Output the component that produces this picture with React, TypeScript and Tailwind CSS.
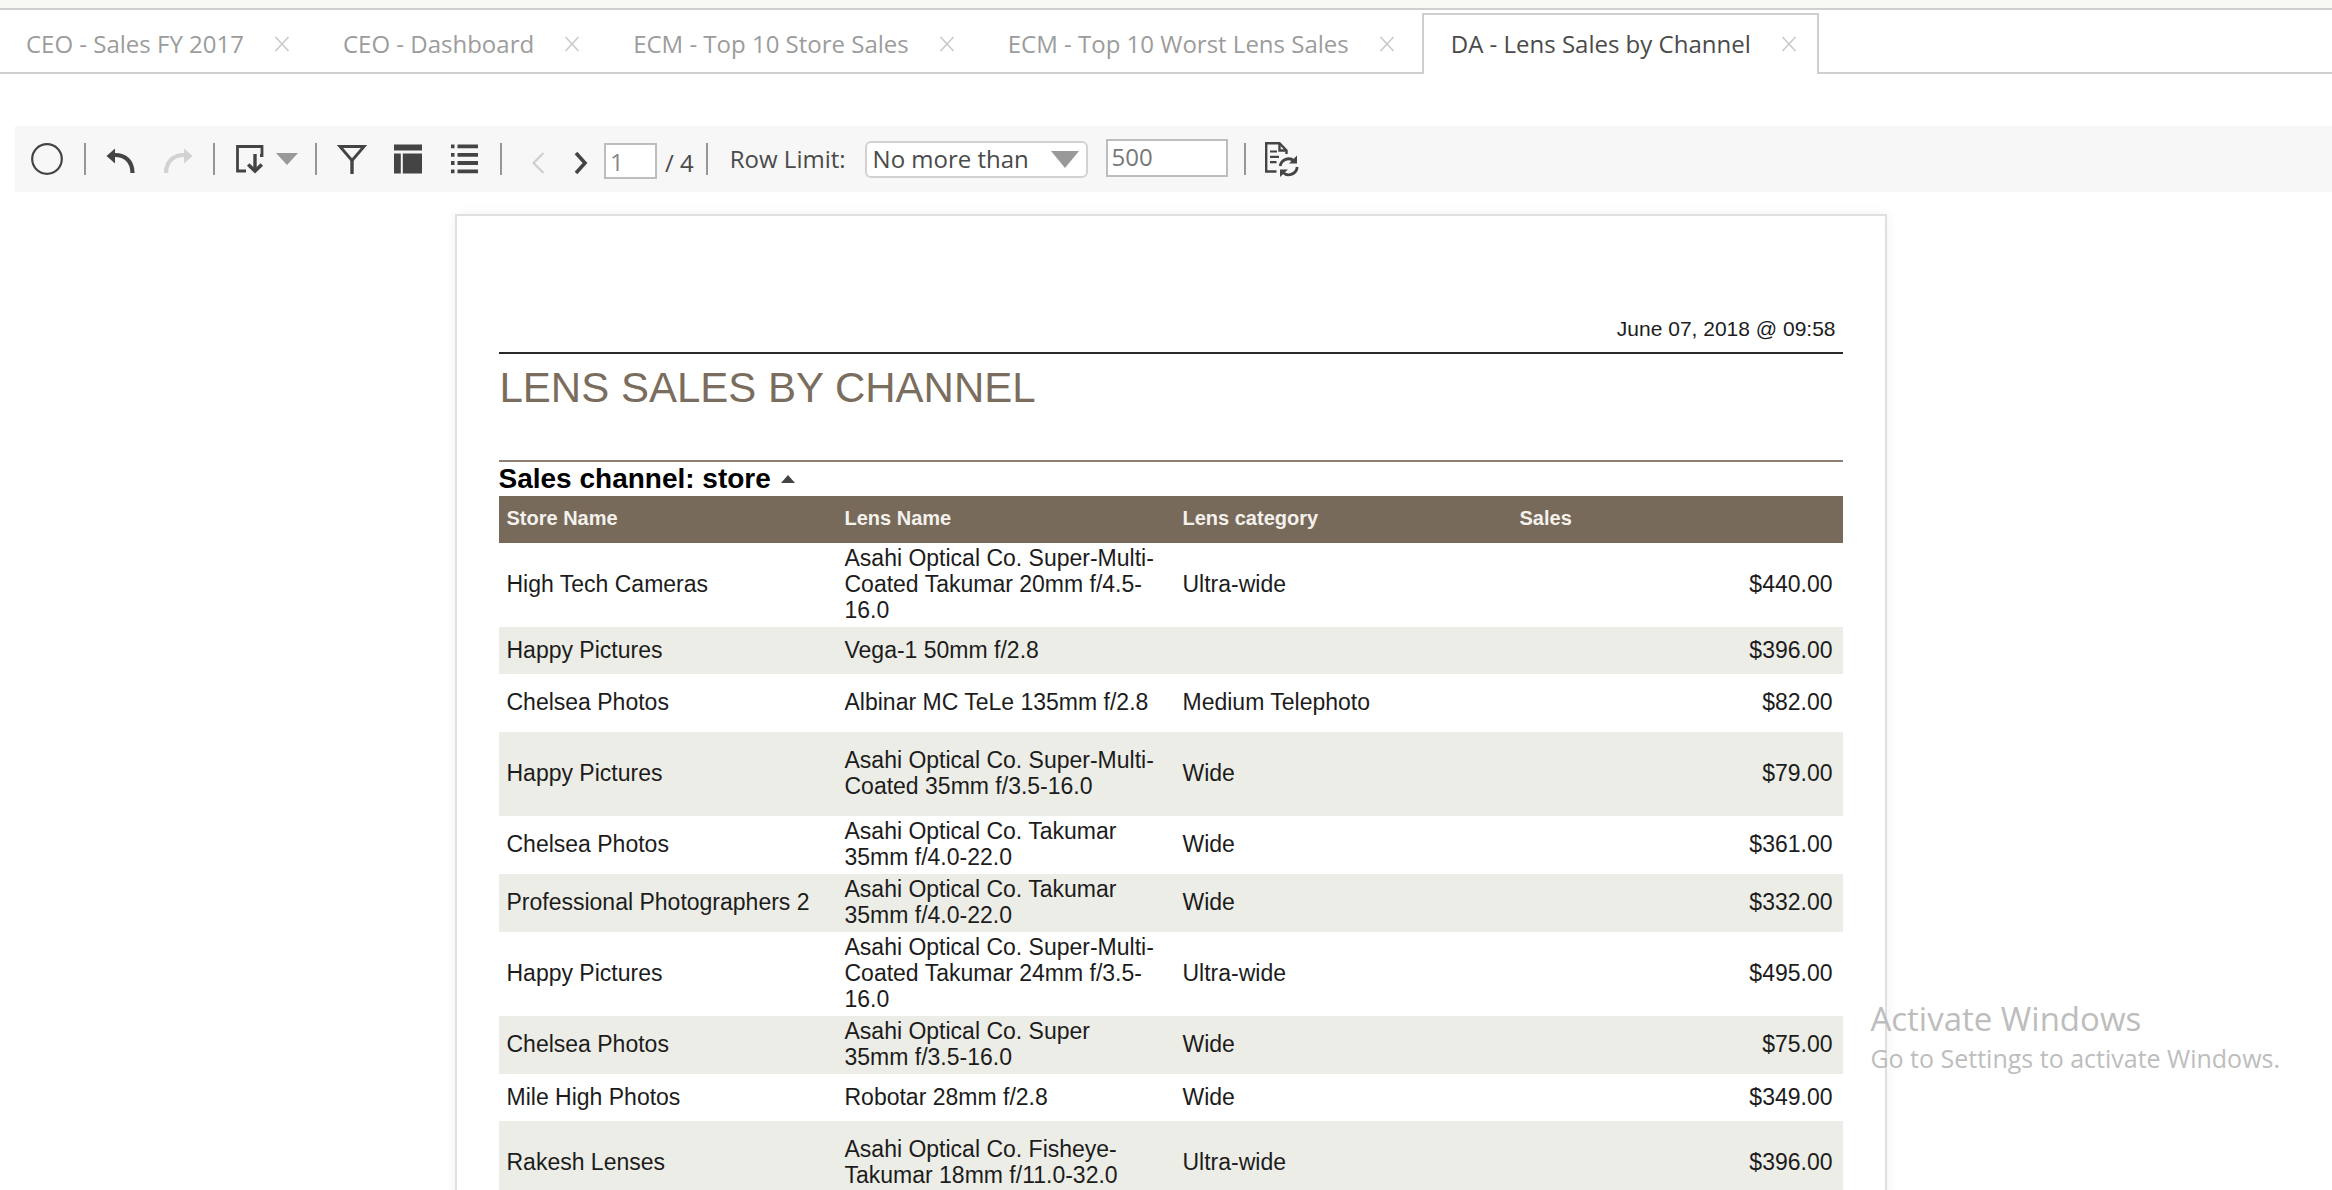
import { useState } from "react";
import type { ReactNode } from "react";

const tabs = [
  "CEO - Sales FY 2017",
  "CEO - Dashboard",
  "ECM - Top 10 Store Sales",
  "ECM - Top 10 Worst Lens Sales",
  "DA - Lens Sales by Channel",
];

type Row = {
  store: string;
  lens: string;
  category: string;
  sales: string;
  height: string;
};

const rows: Row[] = [
  { store: "High Tech Cameras", lens: "Asahi Optical Co. Super-Multi-Coated Takumar 20mm f/4.5-16.0", category: "Ultra-wide", sales: "$440.00", height: "h-[84px]" },
  { store: "Happy Pictures", lens: "Vega-1 50mm f/2.8", category: "", sales: "$396.00", height: "h-[47px]" },
  { store: "Chelsea Photos", lens: "Albinar MC TeLe 135mm f/2.8", category: "Medium Telephoto", sales: "$82.00", height: "h-[58px]" },
  { store: "Happy Pictures", lens: "Asahi Optical Co. Super-Multi-Coated 35mm f/3.5-16.0", category: "Wide", sales: "$79.00", height: "h-[84px]" },
  { store: "Chelsea Photos", lens: "Asahi Optical Co. Takumar 35mm f/4.0-22.0", category: "Wide", sales: "$361.00", height: "h-[58px]" },
  { store: "Professional Photographers 2", lens: "Asahi Optical Co. Takumar 35mm f/4.0-22.0", category: "Wide", sales: "$332.00", height: "h-[58px]" },
  { store: "Happy Pictures", lens: "Asahi Optical Co. Super-Multi-Coated Takumar 24mm f/3.5-16.0", category: "Ultra-wide", sales: "$495.00", height: "h-[84px]" },
  { store: "Chelsea Photos", lens: "Asahi Optical Co. Super 35mm f/3.5-16.0", category: "Wide", sales: "$75.00", height: "h-[58px]" },
  { store: "Mile High Photos", lens: "Robotar 28mm f/2.8", category: "Wide", sales: "$349.00", height: "h-[47px]" },
  { store: "Rakesh Lenses", lens: "Asahi Optical Co. Fisheye-Takumar 18mm f/11.0-32.0", category: "Ultra-wide", sales: "$396.00", height: "h-[84px]" },
];

function TabBar() {
  const [active, setActive] = useState(4);
  return (
    <nav aria-label="Open reports" className="flex h-[61px]">
      {tabs.map((title, i) => (
        <div
          key={title}
          className={
            i === active
              ? "flex items-center gap-[30px] border-2 border-b-0 border-[#cfcfcf] pr-5 pl-[27px] pb-0.5"
              : "flex items-center gap-[30px] border-b-2 border-[#cfcfcf] pt-0.5 pr-[27px] pl-[26px]"
          }
        >
          <button
            type="button"
            onClick={() => setActive(i)}
            className={
              i === active
                ? "whitespace-nowrap text-[#4a4a4a]"
                : "whitespace-nowrap text-[#9c9c9c]"
            }
          >
            {title}
          </button>
          <button type="button" aria-label={"Close " + title}>
            <svg viewBox="0 0 16 16" className="h-4 w-4 stroke-[#cacaca]" strokeWidth="1.6" fill="none">
              <path d="M1.5 1l13 14M14.5 1l-13 14" />
            </svg>
          </button>
        </div>
      ))}
      <div className="flex-1 border-b-2 border-[#cfcfcf]" />
    </nav>
  );
}

function Divider({ className }: { className: string }) {
  return <span className={"h-8 w-0.5 shrink-0 bg-[#98968f] " + className} />;
}

function Tool({ label, className, children }: { label: string; className: string; children: ReactNode }) {
  return (
    <button type="button" aria-label={label} className={"shrink-0 " + className}>
      {children}
    </button>
  );
}

function Toolbar() {
  return (
    <div role="toolbar" aria-label="Report" className="ml-[15px] flex h-[66px] items-center bg-[#f7f7f7] pl-[15px] text-[#4a4a4a]">
      <Tool label="Status" className="mr-5">
        <svg viewBox="0 0 34 34" className="h-[34px] w-[34px]" fill="none" stroke="#444" strokeWidth="2.2">
          <circle cx="17" cy="17" r="14.8" />
        </svg>
      </Tool>
      <Divider className="mr-5" />
      <Tool label="Undo" className="mr-[27px]">
        <svg viewBox="0 0 30 30" className="h-[30px] w-[30px]">
          <path d="M9 11C19 11 26.500 17 26.500 29" fill="none" stroke="#444" strokeWidth="4.200" />
          <path d="M.5 12L9 4.500V19.500z" fill="#444" />
        </svg>
      </Tool>
      <Tool label="Redo" className="mr-5">
        <svg viewBox="0 0 30 30" className="h-[30px] w-[30px]">
          <path d="M21 11C11 11 3 17 3 29" fill="none" stroke="#d2d2d2" strokeWidth="4.200" />
          <path d="M29.500 12L21 4.500V19.500z" fill="#d2d2d2" />
        </svg>
      </Tool>
      <Divider className="mr-5" />
      <Tool label="Export" className="mr-[17px] flex items-center gap-[11px]">
        <svg viewBox="0 0 30 30" className="h-[30px] w-[30px]" fill="none" stroke="#444">
          <path d="M11 27H2.500V2.500H27V11.500H25" strokeWidth="2.800" />
          <path d="M20 10V27" strokeWidth="3.400" />
          <path d="M13.200 20.500L20 27L26.800 20.500" strokeWidth="3.600" />
        </svg>
        <svg viewBox="0 0 22 12" className="h-3 w-[22px]" fill="#999">
          <path d="M0 0H22L11 12z" />
        </svg>
      </Tool>
      <Divider className="mr-5" />
      <Tool label="Filters" className="mr-[26px]">
        <svg viewBox="0 0 30 30" className="h-[30px] w-[30px]" fill="none" stroke="#444">
          <path d="M3 2.500H27L15 16.500z" strokeWidth="2.800" />
          <path d="M15 15V30" strokeWidth="3.400" />
        </svg>
      </Tool>
      <Tool label="Layout" className="mr-[27px]">
        <svg viewBox="0 0 30 30" className="h-[30px] w-[30px]" fill="#444">
          <path d="M1 0.500H29V6.500H1zM1 9.500H7.800V29.500H1zM9.800 9.500H29V29.500H9.800z" />
        </svg>
      </Tool>
      <Tool label="Table of contents" className="mr-5">
        <svg viewBox="0 0 30 30" className="h-[30px] w-[30px]" fill="#444">
          <path d="M1 0.500H4.500V4.300H1zM7.500 0.500H28V4.300H7.500zM1 8.900H4.500V12.700H1zM7.500 8.900H28V12.700H7.500zM1 17.100H4.500V20.900H1zM7.500 17.100H28V20.900H7.500zM1 25.500H4.500V29.300H1zM7.500 25.500H28V29.300H7.500z" />
        </svg>
      </Tool>
      <Divider className="mr-[29px]" />
      <Tool label="Previous page" className="mr-[29px] pt-2">
        <svg viewBox="0 0 14 22" className="h-[22px] w-[14px]" fill="none" stroke="#cfcfcf" strokeWidth="2.200">
          <path d="M12.500 1L2.500 11L12.500 21" />
        </svg>
      </Tool>
      <Tool label="Next page" className="mr-4 pt-2">
        <svg viewBox="0 0 14 22" className="h-[22px] w-[14px]" fill="none" stroke="#444" strokeWidth="3.600">
          <path d="M2 1L11 11L2 21" />
        </svg>
      </Tool>
      <input
        aria-label="Page"
        defaultValue="1"
        className="mt-1 mr-2 h-9 w-[53px] shrink-0 border-2 border-[#bdbdbd] bg-white px-1 text-[#888]"
      />
      <span className="mt-2 mr-3 whitespace-nowrap">/ 4</span>
      <Divider className="mr-[22px]" />
      <label htmlFor="limit-mode" className="mr-[19px] whitespace-nowrap">
        Row Limit:
      </label>
      <div className="relative mr-[18px] shrink-0">
        <select
          id="limit-mode"
          className="block h-[37px] w-[223px] appearance-none rounded-md border-2 border-[#d2d2d2] bg-white pl-1.5 leading-8 text-[#4a4a4a]"
        >
          <option>No more than</option>
        </select>
        <svg viewBox="0 0 28 17" className="pointer-events-none absolute top-[10px] right-[9px] h-[17px] w-7" fill="#999">
          <path d="M0 0H28L14 17z" />
        </svg>
      </div>
      <input
        aria-label="Row limit"
        defaultValue="500"
        className="mr-4 mb-0.5 h-[38px] w-[122px] shrink-0 border-2 border-[#bdbdbd] bg-white px-1 pb-1 text-[#777]"
      />
      <Divider className="mr-[18px]" />
      <Tool label="Refresh data" className="">
        <svg viewBox="0 0 36 36" className="h-9 w-9" fill="none" stroke="#444" strokeWidth="2.400">
          <path d="M12.500 30.500H2.200V2.200H15.500L22.500 9.500V13" />
          <path d="M15.500 2.500V9.500H22.500" strokeWidth="2.400" />
          <path d="M6 10.500H13M6 15.800H15M6 21.200H12.500" strokeWidth="2.200" />
          <path d="M16.200 25A8.500 8.500 0 0 1 30 19.800M33.200 26A8.500 8.500 0 0 1 19 31.500" strokeWidth="2.800" />
          <path d="M33 14.500V22.500H25zM16 36V28.500H24z" fill="#444" stroke="none" />
        </svg>
      </Tool>
    </div>
  );
}

function SalesTable() {
  return (
    <table className="w-full table-fixed border-collapse text-[23px] leading-[26px] text-[#1c1c1c]">
      <colgroup>
        <col className="w-[338px]" />
        <col className="w-[338px]" />
        <col className="w-[337px]" />
        <col />
      </colgroup>
      <thead>
        <tr className="h-[47px] bg-[#776a5a] text-left text-xl text-[#f4f1ec]">
          <th scope="col" className="px-2 pt-0 pb-1">Store Name</th>
          <th scope="col" className="px-2 pt-0 pb-1">Lens Name</th>
          <th scope="col" className="px-2 pt-0 pb-1">Lens category</th>
          <th scope="col" className="px-2 pt-0 pb-1">Sales</th>
        </tr>
      </thead>
      <tbody>
        {rows.map((row, i) => (
          <tr key={i} className={"even:bg-[#ecede6] " + row.height}>
            <td className="px-2 pt-0 pb-0.5 align-middle">{row.store}</td>
            <td className="pt-0 pr-4 pb-0.5 pl-2 align-middle">{row.lens}</td>
            <td className="px-2 pt-0 pb-0.5 align-middle">{row.category}</td>
            <td className="pt-0 pr-2.5 pb-0.5 pl-2 text-right align-middle">{row.sales}</td>
          </tr>
        ))}
      </tbody>
    </table>
  );
}

export default function App() {
  return (
    <div className="relative flex h-screen flex-col overflow-hidden bg-white font-['Open_Sans',sans-serif] text-2xl">
      <div className="h-[10px] shrink-0 border-b-2 border-[#cfcfcf] bg-[#f8f8f5]" />
      <header className="shrink-0 pt-[3px]">
        <TabBar />
        <div className="pt-[52px]">
          <Toolbar />
        </div>
      </header>
      <main className="min-h-0 flex-1 overflow-y-auto pt-[22px] pl-[9px] font-['Liberation_Sans',Arial,sans-serif] [scrollbar-width:none]">
        <article className="mx-auto max-w-[1432px] border-2 border-[#e0e0e0] px-[42px] pb-12 shadow-[0_0_12px_rgba(0,0,0,0.06)]">
          <p className="border-b-2 border-[#2a2a2a] pt-[100px] pr-[7px] pb-2.5 text-right text-[21px] leading-[26px] text-[#1c1c1c]">
            June 07, 2018 @ 09:58
          </p>
          <h1 className="pt-2.5 pb-12 pl-px text-[42px] leading-[48px] text-[#7b6d5d]">LENS SALES BY CHANNEL</h1>
          <h2 className="flex items-center gap-2.5 border-t-2 border-[#8d8072] pb-px text-[28px] leading-[33px] font-bold text-black">
            Sales channel: store
            <button type="button" aria-label="Collapse group">
              <svg viewBox="0 0 14 8" className="h-2 w-3.5" fill="#444">
                <path d="M7 0L14 8H0z" />
              </svg>
            </button>
          </h2>
          <SalesTable />
        </article>
      </main>
      <aside className="pointer-events-none absolute right-[52px] bottom-[115px] text-[#bdbdbd]">
        <p className="text-[33px] leading-[44px]">Activate Windows</p>
        <p className="text-[25px] leading-[34px]">Go to Settings to activate Windows.</p>
      </aside>
    </div>
  );
}
